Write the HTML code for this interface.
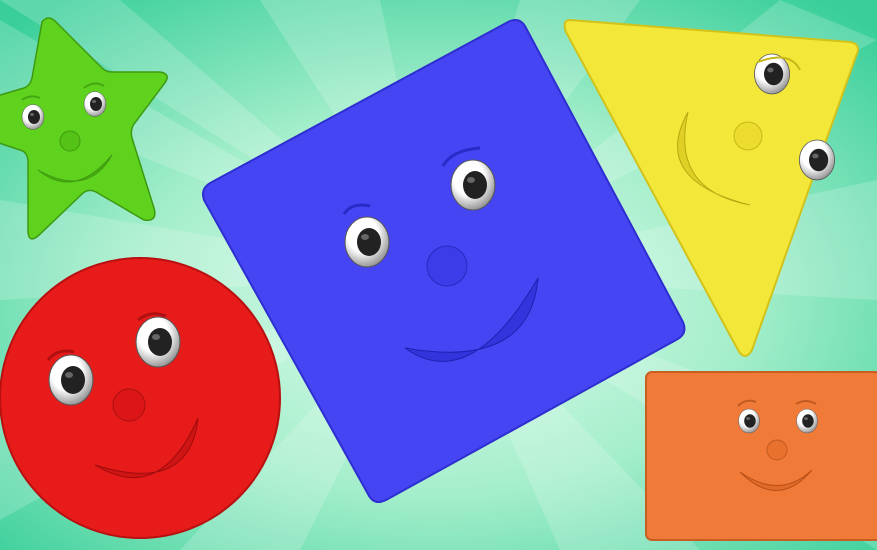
<!DOCTYPE html>
<html><head><meta charset="utf-8"><style>html,body{margin:0;padding:0;width:877px;height:550px;overflow:hidden}svg{display:block}</style></head>
<body>
<svg width="877" height="550" viewBox="0 0 877 550" xmlns="http://www.w3.org/2000/svg">
<defs>
<radialGradient id="bg" cx="0.5" cy="0.55" r="0.7">
<stop offset="0" stop-color="#e0fcee"/><stop offset="0.5" stop-color="#a4eecb"/><stop offset="1" stop-color="#3acf9a"/>
</radialGradient>
<radialGradient id="eye" cx="0.4" cy="0.35" r="0.7"><stop offset="0.5" stop-color="#fff"/><stop offset="1" stop-color="#888"/></radialGradient>
<g id="e"><ellipse rx="22" ry="25" fill="url(#eye)" stroke="#555" stroke-width="1"/><ellipse cx="2" cy="0" rx="12" ry="14" fill="#222"/><ellipse cx="-2" cy="-5" rx="4" ry="3" fill="#666"/></g>
</defs>
<rect width="877" height="550" fill="url(#bg)"/>
<g fill="#ffffff" opacity="0.18">
<polygon points="438,275 0,0 120,0"/><polygon points="438,275 260,0 380,0"/><polygon points="438,275 520,0 640,0"/><polygon points="438,275 780,0 877,40"/><polygon points="438,275 877,180 877,300"/><polygon points="438,275 877,440 877,550"/><polygon points="438,275 700,550 560,550"/><polygon points="438,275 300,550 180,550"/><polygon points="438,275 0,520 0,420"/><polygon points="438,275 0,300 0,200"/><polygon points="438,275 0,100 0,20"/>
</g>
<!-- star -->
<path d="M42,22 Q48,14 56,22 L102,68 Q106,72 112,72 L160,72 Q172,74 164,84 L134,124 Q130,130 132,138 L154,208 Q158,222 144,220 L96,192 Q88,188 82,194 L38,236 Q28,244 28,230 L28,162 Q28,152 20,150 L-10,140 L-10,98 L24,88 Q30,86 32,78 Z" fill="#5ed21d" stroke="#3e9a10" stroke-width="1.5"/>
<path d="M22,100 Q30,94 40,98" fill="none" stroke="#44a812" stroke-width="2"/>
<path d="M84,88 Q94,80 104,86" fill="none" stroke="#44a812" stroke-width="2"/>
<g transform="translate(33,117) scale(0.5)"><use href="#e"/></g>
<g transform="translate(95,104) scale(0.5)"><use href="#e"/></g>
<circle cx="70" cy="141" r="10" fill="#55c315" stroke="#3e9a10"/>
<path d="M38,170 Q75,200 112,155 Q88,198 38,170Z" fill="#49b012" stroke="#3e9a10"/>
<!-- blue square -->
<path d="M212,182 L508,22 Q520,16 526,28 L683,322 Q688,334 676,340 L386,500 Q374,506 368,494 L204,200 Q200,188 212,182Z" fill="#4545f3" stroke="#2e2ed0" stroke-width="2"/>
<path d="M344,214 Q352,202 370,206" fill="none" stroke="#2a2ac8" stroke-width="3"/>
<path d="M443,166 Q452,150 480,148" fill="none" stroke="#2a2ac8" stroke-width="3"/>
<use href="#e" x="367" y="242"/>
<use href="#e" x="473" y="185"/>
<circle cx="447" cy="266" r="20" fill="#3c3ce8" stroke="#2a2ac0"/>
<path d="M405,348 Q470,395 538,278 Q530,370 405,348Z" fill="#3434dc" stroke="#2020b0"/>
<!-- triangle -->
<path d="M570,20 L850,42 Q862,44 856,56 L752,350 Q745,362 738,350 L566,32 Q562,20 570,20Z" fill="#f3e73a" stroke="#d2c21a" stroke-width="2"/>
<use href="#e" x="772" y="74" transform="translate(772,74) scale(0.8) translate(-772,-74)"/>
<use href="#e" x="817" y="160" transform="translate(817,160) scale(0.8) translate(-817,-160)"/>
<path d="M758,62 Q790,50 800,70" fill="none" stroke="#c8b818" stroke-width="2"/>
<circle cx="748" cy="136" r="14" fill="#eddc30" stroke="#c8b818"/>
<path d="M688,112 Q650,180 750,205 Q670,190 688,112Z" fill="#e0cf25" stroke="#b8a810"/>
<!-- red circle -->
<circle cx="140" cy="398" r="140" fill="#e81b1b" stroke="#b81010" stroke-width="2"/>
<use href="#e" x="71" y="380"/>
<use href="#e" x="158" y="342"/>
<path d="M48,360 Q58,348 74,352" fill="none" stroke="#b01010" stroke-width="3"/>
<path d="M138,320 Q150,310 166,316" fill="none" stroke="#b01010" stroke-width="3"/>
<circle cx="129" cy="405" r="16" fill="#dc1616" stroke="#a81010"/>
<path d="M95,465 Q160,505 198,418 Q190,495 95,465Z" fill="#cf1414" stroke="#a00c0c"/>
<!-- orange rect -->
<rect x="646" y="372" width="235" height="168" rx="6" fill="#f07b39" stroke="#c85e22" stroke-width="2"/>
<g transform="translate(749,421) scale(0.48)"><use href="#e"/></g>
<g transform="translate(807,421) scale(0.48)"><use href="#e"/></g>
<path d="M738,406 Q746,398 756,402" fill="none" stroke="#c05a20" stroke-width="2"/>
<path d="M796,404 Q806,398 816,404" fill="none" stroke="#c05a20" stroke-width="2"/>
<circle cx="777" cy="450" r="10" fill="#e8712e" stroke="#c05a20"/>
<path d="M740,472 Q778,510 812,470 Q780,500 740,472Z" fill="#e06a28" stroke="#b85018"/>
</svg>
</body></html>
